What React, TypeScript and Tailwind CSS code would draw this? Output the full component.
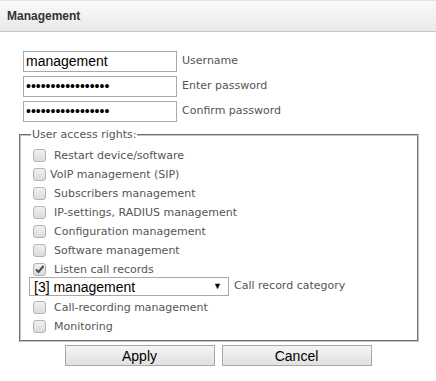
import React from "react";

const labelFont = "font-['DejaVu_Sans',Verdana,sans-serif] text-[11px] text-[#555]";

const Box = ({ checked }: { checked?: boolean }) => (
  <span className="relative mb-[3px] ml-[4px] inline-block h-[13px] w-[13px] shrink-0 rounded-[3px] border border-[#b4b4b4] bg-gradient-to-b from-[#f0f0f0] to-[#dcdcdc]">
    {checked ? (
      <svg viewBox="0 0 13 13" className="absolute left-[-1px] top-[-1px] h-[13px] w-[13px]">
        <path d="M3 6.5 L5.5 9 L10.5 3" fill="none" stroke="#4a4a4a" strokeWidth="2" />
      </svg>
    ) : null}
  </span>
);

const Row = ({ label, checked, tight }: { label: string; checked?: boolean; tight?: boolean }) => (
  <div className="flex h-[19px] items-center">
    <Box checked={checked} />
    <span className={`${labelFont} ${tight ? "ml-[4px]" : "ml-[8px]"}`}>{label}</span>
  </div>
);

export default function App() {
  return (
    <div className="h-[381px] w-[436px] bg-white font-['Liberation_Sans',Arial,sans-serif]">
      <div className="flex h-[32px] items-center border-t border-b border-t-[#e4e4e4] border-b-[#c8c8c8] bg-gradient-to-b from-[#fafafa] to-[#e9e9e9] pl-[7px]">
        <span className="text-[12px] font-bold text-[#333]">Management</span>
      </div>

      <div className="flex flex-col gap-[4px] pl-[23px] pt-[19px]">
        {[
          { type: "text", value: "management", label: "Username" },
          { type: "password", value: "aaaaaaaaaaaaaaaaa", label: "Enter password" },
          { type: "password", value: "aaaaaaaaaaaaaaaaa", label: "Confirm password" },
        ].map((f) => (
          <div key={f.label} className="flex items-center">
            <input
              type={f.type}
              defaultValue={f.value}
              className="h-[21px] w-[154px] border border-[#a9a9a9] px-[2px] text-[14px] text-black outline-none"
            />
            <span className={`${labelFont} ml-[5px]`}>{f.label}</span>
          </div>
        ))}
      </div>

      <fieldset className="ml-[19px] mt-[6px] w-[400px] border-2 border-[#c4c4c4] pb-[3px] pl-[8px] [border-style:groove]">
        <legend className={`${labelFont} ml-[2px] px-[1px] leading-[13px]`}>User access rights:</legend>
        <div className="pt-[6px]">
          <Row label="Restart device/software" />
          <Row label="VoIP management (SIP)" tight />
          <Row label="Subscribers management" />
          <Row label="IP-settings, RADIUS management" />
          <Row label="Configuration management" />
          <Row label="Software management" />
          <Row label="Listen call records" checked />
          <div className="mb-[3px] mt-[-3px] flex items-center">
            <div className="flex h-[19px] w-[200px] items-center justify-between border border-[#a9a9a9] bg-white pl-[4px] pr-[6px]">
              <span className="text-[14px] leading-none text-black">[3] management</span>
              <span className="text-[9px] leading-none text-black">▼</span>
            </div>
            <span className={`${labelFont} ml-[5px]`}>Call record category</span>
          </div>
          <Row label="Call-recording management" />
          <Row label="Monitoring" />
        </div>
      </fieldset>

      <div className="mt-[3px] flex justify-center gap-[7px]">
        <button className="h-[21px] w-[150px] border border-[#a8a8a8] bg-gradient-to-b from-[#f5f5f5] to-[#e1e1e1] text-[14px] text-black">
          Apply
        </button>
        <button className="h-[21px] w-[150px] border border-[#a8a8a8] bg-gradient-to-b from-[#f5f5f5] to-[#e1e1e1] text-[14px] text-black">
          Cancel
        </button>
      </div>
    </div>
  );
}
